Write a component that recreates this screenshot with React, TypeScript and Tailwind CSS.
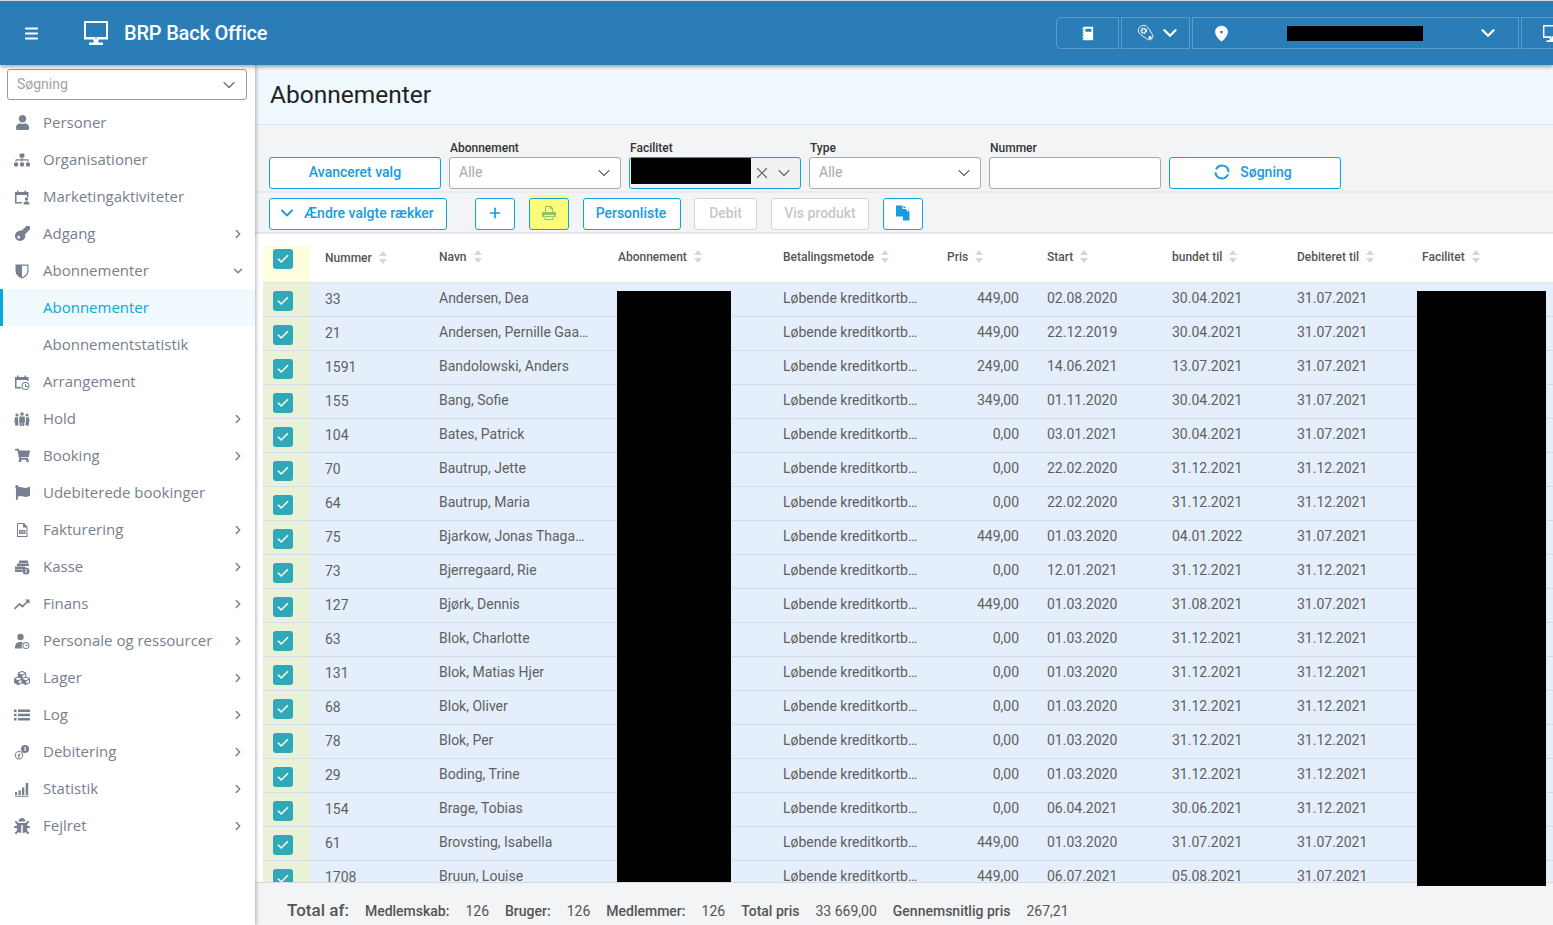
import { ReactNode } from "react";
import { ChevronDown, ChevronRight, Plus, X, Check, Menu, MapPin } from "lucide-react";
import { FaUser, FaSitemap, FaKey, FaShoppingCart, FaFlag, FaCubes, FaBug } from "react-icons/fa";

const rows = [
  ["33", "Andersen, Dea", "449,00", "02.08.2020", "30.04.2021", "31.07.2021"],
  ["21", "Andersen, Pernille Gaa…", "449,00", "22.12.2019", "30.04.2021", "31.07.2021"],
  ["1591", "Bandolowski, Anders", "249,00", "14.06.2021", "13.07.2021", "31.07.2021"],
  ["155", "Bang, Sofie", "349,00", "01.11.2020", "30.04.2021", "31.07.2021"],
  ["104", "Bates, Patrick", "0,00", "03.01.2021", "30.04.2021", "31.07.2021"],
  ["70", "Bautrup, Jette", "0,00", "22.02.2020", "31.12.2021", "31.12.2021"],
  ["64", "Bautrup, Maria", "0,00", "22.02.2020", "31.12.2021", "31.12.2021"],
  ["75", "Bjarkow, Jonas Thaga…", "449,00", "01.03.2020", "04.01.2022", "31.07.2021"],
  ["73", "Bjerregaard, Rie", "0,00", "12.01.2021", "31.12.2021", "31.12.2021"],
  ["127", "Bjørk, Dennis", "449,00", "01.03.2020", "31.08.2021", "31.07.2021"],
  ["63", "Blok, Charlotte", "0,00", "01.03.2020", "31.12.2021", "31.12.2021"],
  ["131", "Blok, Matias Hjer", "0,00", "01.03.2020", "31.12.2021", "31.12.2021"],
  ["68", "Blok, Oliver", "0,00", "01.03.2020", "31.12.2021", "31.12.2021"],
  ["78", "Blok, Per", "0,00", "01.03.2020", "31.12.2021", "31.12.2021"],
  ["29", "Boding, Trine", "0,00", "01.03.2020", "31.12.2021", "31.12.2021"],
  ["154", "Brage, Tobias", "0,00", "06.04.2021", "30.06.2021", "31.12.2021"],
  ["61", "Brovsting, Isabella", "449,00", "01.03.2020", "31.07.2021", "31.07.2021"],
  ["1708", "Bruun, Louise", "449,00", "06.07.2021", "05.08.2021", "31.07.2021"],
];

const gridCols = "grid grid-cols-[47px_114px_179px_165px_164px_100px_125px_125px_125px_145px]";

function SvgIcon({ children }: { children: ReactNode }) {
  return (
    <svg viewBox="0 0 16 16" width="16" height="16" fill="currentColor">
      {children}
    </svg>
  );
}

const CalendarUser = () => (
  <SvgIcon>
    <path d="M1 3h2V1.500h1.500V3h6V1.500H12V3h2.500v5H13V6H2.500v7H8v1.500H1z" />
    <circle cx="12.500" cy="10" r="1.700" />
    <path d="M9.500 15.500c0-2.200 1.300-3.200 3-3.200s3 1 3 3.200z" />
  </SvgIcon>
);

const CalendarClock = () => (
  <SvgIcon>
    <path d="M1 3h2V1.500h1.500V3h6V1.500H12V3h2.500v4H13V6H2.500v7H7v1.500H1z" />
    <path fillRule="evenodd" d="M11.500 8a4 4 0 1 1 0 8 4 4 0 0 1 0-8zm0 1a3 3 0 1 0 0 6 3 3 0 0 0 0-6zM11 10h1v2h2v1h-3z" />
  </SvgIcon>
);

const HalfShield = () => (
  <SvgIcon>
    <path d="M1.500 1.500H8v14c-3.500-1.500-6.500-4-6.500-7.500z" />
    <path fillRule="evenodd" d="M8 1.500h6.500V8c0 3.500-3 6-6.500 7.500v-1.300c2.900-1.300 5.300-3.400 5.300-6.200V2.700H8z" />
  </SvgIcon>
);

const Invoice = () => (
  <SvgIcon>
    <path fillRule="evenodd" d="M3 1h7l3.500 3.500V15H3zM4 2v12h8.500V5.500H9V2zM5 8h6.500v4H5zm1 1v.8h1.500V9zm2.500 0v.8H10.500V9zM6 10.700v.6h1.500v-.6zm2.500 0v.6h2v-.6z" />
  </SvgIcon>
);

const CashStack = () => (
  <SvgIcon>
    <path d="M5 1.500h9v2.500H5zM3 4.500h12v2.500H3zM1 7.500h10V10H1zM1 10.500h7.500V13H1z" />
    <circle cx="12" cy="12" r="3.500" />
    <rect x="11.500" y="10" width="1" height="4" fill="#fff" />
  </SvgIcon>
);

const PersonClock = () => (
  <SvgIcon>
    <circle cx="6.500" cy="4" r="3.200" />
    <path d="M1 15.500c0-4.500 1.500-6.500 5.500-6.500 1 0 1.800.1 2.500.5-1 1-1.500 3-1 6z" />
    <path fillRule="evenodd" d="M12 9a3.500 3.500 0 1 1 0 7 3.500 3.500 0 0 1 0-7zm0 1a2.500 2.500 0 1 0 0 5 2.500 2.500 0 0 0 0-5zm-.4.800h.8v1.500h1.300v.8h-2.100z" />
  </SvgIcon>
);

const Coins = () => (
  <SvgIcon>
    <path fillRule="evenodd" d="M5 7a4.200 4.200 0 1 1 0 8.400A4.200 4.200 0 0 1 5 7zm0 1a3.200 3.200 0 1 0 0 6.400A3.200 3.200 0 0 0 5 8z" />
    <path d="M4 9.800h2.200v2.100H4.900v1h1.400v.7H3.800v-2.300h1.500v-.9H4z" />
    <path fillRule="evenodd" d="M11 1a4 4 0 1 1 0 8 4 4 0 0 1 0-8zm-.5 2v4h1.200V3z" />
  </SvgIcon>
);

const ThreePeople = () => (
  <SvgIcon>
    <circle cx="3" cy="4" r="1.600" />
    <circle cx="8" cy="3" r="1.800" />
    <circle cx="13" cy="4" r="1.600" />
    <path d="M1 6.300h2.800l.4 3.700.4 4H3.300v1H1.500L.5 10z" />
    <path d="M15 6.300h-2.800l-.4 3.700-.4 4h1.300v1h1.800l1-5z" />
    <path d="M5.300 5.500h5.400l.3 5-.7 1v3.500H8.300v-3.500h-.6V15H5.700v-3.500l-.7-1z" />
  </SvgIcon>
);

const ZigzagLine = () => (
  <svg viewBox="0 0 16 16" width="16" height="16" fill="none" stroke="currentColor" strokeWidth="1.700">
    <path d="M0.500 13 5.500 8l3 2.500L14 5" />
    <path d="M11 3.500h4.500V8" strokeWidth="0" fill="currentColor" />
  </svg>
);

const ListLines = () => (
  <SvgIcon>
    <path d="M0 2.500h2.500V5H0zM4 2.500h12V5H4zM0 6.800h2.500v2.500H0zM4 6.800h12v2.500H4zM0 11h2.500v2.500H0zM4 11h12v2.500H4z" />
  </SvgIcon>
);

const Bars = () => (
  <SvgIcon>
    <path d="M1 11h2v3H1zM4.500 9.500h2.300V14H4.500zM8 6.500h2.300V14H8zM11.700 2h2.500v12h-2.500zM1 14.700h13.700v1H1z" />
  </SvgIcon>
);

const BeltGear = () => (
  <svg viewBox="0 0 20 20" width="18" height="18" fill="none" stroke="currentColor">
    <path d="M7.500 1.500c2.500 0 4 1.500 5 3l4.500 7c1.500 2.500 0 5.500-2.500 6-1.500.3-2.500-.2-3.500-1l-6-4c-2-1.500-3.500-3-3.500-5 0-3.500 2.500-6 6-6z" strokeWidth="1" />
    <circle cx="7.500" cy="7.500" r="2.500" strokeWidth="2.200" strokeDasharray="1.600 0.500" />
    <circle cx="14.500" cy="15" r="1.800" fill="currentColor" stroke="none" />
  </svg>
);

const Notebook = () => (
  <svg viewBox="0 0 14 16" width="12" height="15" fill="currentColor">
    <path fillRule="evenodd" d="M1.500 0H13v16H1.500zM4 2.500V6h7V2.500z" />
    <path d="M0 2h1v1H0zM0 5h1v1H0zM0 8h1v1H0zM0 11h1v1H0zM0 14h1v1H0z" />
  </svg>
);

const Monitor = ({ size }: { size: number }) => (
  <svg viewBox="0 0 24 24" width={size} height={size} fill="currentColor">
    <path fillRule="evenodd" d="M0 0h24v18.500H14.500v3H19V24H5v-2.500h4.500v-3H0zM2 2v14h20V2z" />
    <circle cx="12" cy="17.300" r="0.800" fill="#2a7db7" />
  </svg>
);

const CopyDocs = () => (
  <svg viewBox="0 0 16 16" width="16" height="16" fill="currentColor">
    <path d="M1 0.500h6.500V4H11v7.500H1z" />
    <path d="M8.500 0.500 11 3H8.500z" />
    <path d="M8 5h4v1.500h2.500V15.500H8zM13 5l1.500 1H13z" />
  </svg>
);

const RingArrows = () => (
  <svg viewBox="0 0 16 16" width="16" height="16" fill="none" stroke="currentColor" strokeWidth="2" className="mr-[10px]">
    <circle cx="8" cy="8" r="6.500" strokeDasharray="17.400 3" transform="rotate(20 8 8)" />
  </svg>
);

const PrinterIcon = () => (
  <svg viewBox="0 0 16 16" width="16" height="16" fill="currentColor">
    <path fillRule="evenodd" d="M4 1h6l2 2v4h-1V4H9V2H5v5H4z" />
    <path d="M1 7h14v5h-2v-2H3v2H1z" />
    <path d="M3.500 11h9v4h-9zM4.500 12v2h7v-2z" fillRule="evenodd" />
  </svg>
);

const menu: { icon: ReactNode; label: string; arrow?: "right" | "down"; active?: boolean; sub?: boolean }[] = [
  { icon: <FaUser size={15} />, label: "Personer" },
  { icon: <FaSitemap size={16} />, label: "Organisationer" },
  { icon: <CalendarUser />, label: "Marketingaktiviteter" },
  { icon: <FaKey size={15} className="rotate-180" />, label: "Adgang", arrow: "right" },
  { icon: <HalfShield />, label: "Abonnementer", arrow: "down" },
  { icon: null, label: "Abonnementer", active: true, sub: true },
  { icon: null, label: "Abonnementstatistik", sub: true },
  { icon: <CalendarClock />, label: "Arrangement" },
  { icon: <ThreePeople />, label: "Hold", arrow: "right" },
  { icon: <FaShoppingCart size={15} />, label: "Booking", arrow: "right" },
  { icon: <FaFlag size={15} />, label: "Udebiterede bookinger" },
  { icon: <Invoice />, label: "Fakturering", arrow: "right" },
  { icon: <CashStack />, label: "Kasse", arrow: "right" },
  { icon: <ZigzagLine />, label: "Finans", arrow: "right" },
  { icon: <PersonClock />, label: "Personale og ressourcer", arrow: "right" },
  { icon: <FaCubes size={16} />, label: "Lager", arrow: "right" },
  { icon: <ListLines />, label: "Log", arrow: "right" },
  { icon: <Coins />, label: "Debitering", arrow: "right" },
  { icon: <Bars />, label: "Statistik", arrow: "right" },
  { icon: <FaBug size={16} />, label: "Fejlret", arrow: "right" },
];

function SortIcon() {
  return (
    <svg viewBox="0 0 8 13" width="8" height="13" fill="#d4d6d9" className="ml-[7px] shrink-0">
      <path d="M4 0 8 5H0zM4 13 0 8h8z" />
    </svg>
  );
}

function Checkbox() {
  return (
    <div className="w-5 h-5 rounded-[3px] bg-[#2fa9b8] flex items-center justify-center">
      <Check size={14} strokeWidth={2.5} className="text-white" />
    </div>
  );
}

function Select({ label, value }: { label: string; value: string }) {
  return (
    <div className="w-[172px]">
      <div className="text-xs leading-[14px] mb-[2px] pl-[1px] text-[#333] font-medium">{label}</div>
      <div className="h-8 bg-white border border-[#a9a9a9] rounded-[3px] flex items-center justify-between pl-[9px] pr-[6px] text-sm text-[#a8a8a8]">
        <span className="pb-[2px]">{value}</span>
        <ChevronDown size={20} strokeWidth={1.3} className="text-[#666]" />
      </div>
    </div>
  );
}

function ToolButton({ children, className }: { children: ReactNode; className: string }) {
  return (
    <button className={`h-8 shrink-0 rounded-[3px] border border-[#0ea5dc] text-sm font-medium flex items-center justify-center pb-[2px] ${className}`}>
      {children}
    </button>
  );
}

export default function App() {
  const headers = ["Nummer", "Navn", "Abonnement", "Betalingsmetode", "Pris", "Start", "bundet til", "Debiteret til", "Facilitet"];

  return (
    <div className="h-[925px] overflow-hidden flex flex-col bg-white font-['Roboto',sans-serif]">
      <header className="relative z-20 h-[65px] shrink-0 bg-[#2a7db7] border-t border-[#d4d8db] shadow-[0_2px_4px_rgba(0,0,0,0.35)] flex items-center text-white overflow-hidden">
        <Menu size={17} strokeWidth={2.6} className="ml-[23px]" />
        <div className="ml-[44px]"><Monitor size={24} /></div>
        <div className="ml-4 text-xl font-medium tracking-[-0.2px]">BRP Back Office</div>
        <div className="ml-auto flex h-8 gap-[2px] shrink-0 w-[497px]">
          <div className="w-[63px] shrink-0 border border-white/25 rounded-l-[5px] flex items-center justify-center"><Notebook /></div>
          <div className="w-[69px] shrink-0 border border-white/25 flex items-center pl-[15px] gap-[4px]">
            <BeltGear />
            <ChevronDown size={22} strokeWidth={2.6} />
          </div>
          <div className="w-[327px] shrink-0 border border-white/25 flex items-center pl-[20px]">
            <MapPin size={17} fill="currentColor" stroke="currentColor" className="[&>circle]:fill-[#2a7db7]" />
            <div className="ml-[57px] w-[136px] h-[15px] bg-black" />
            <ChevronDown size={22} strokeWidth={2.6} className="ml-[54px]" />
          </div>
          <div className="w-[60px] shrink-0 border border-white/25 flex items-center pl-[21px]"><Monitor size={17} /></div>
        </div>
      </header>

      <div className="flex-1 flex min-h-0">
        <aside className="relative z-10 w-[255px] shrink-0 bg-white shadow-[1px_0_4px_rgba(0,0,0,0.3)] font-['Open_Sans',sans-serif] text-[15px] text-[#76808e]">
          <div className="ml-[7px] mr-2 mt-1 mb-1 h-[31px] border border-[#9a9a9a] rounded-[3px] flex items-center justify-between pl-[9px] pr-[7px] font-['Roboto',sans-serif] text-sm text-[#a3a3a3]">
            <span className="pb-[1px]">Søgning</span>
            <ChevronDown size={20} strokeWidth={1.3} className="text-[#666]" />
          </div>
          {menu.map((m, i) => (
            <div key={i} className={`h-[37px] flex items-center ${m.active ? "bg-[#f0f9fd] border-l-[3px] border-[#0ba6dc] text-[#0ba6dc] pl-[40px]" : "pl-[14px]"}`}>
              {!m.sub && <span className="w-4 mr-[13px] flex justify-center text-[#76808e]">{m.icon}</span>}
              {m.sub && !m.active && <span className="w-[29px]" />}
              <span className="whitespace-nowrap">{m.label}</span>
              {m.arrow === "right" && <ChevronRight size={14} strokeWidth={2.5} className="ml-auto mr-[10px]" />}
              {m.arrow === "down" && <ChevronDown size={14} strokeWidth={2.5} className="ml-auto mr-[10px]" />}
            </div>
          ))}
        </aside>

        <main className="flex-1 min-w-0 flex flex-col bg-[#f3f4f6]">
          <div className="h-[60px] shrink-0 bg-[#f0f9fd] border-b border-[#e2e5e8] flex items-center pl-[15px] pt-[2px] text-[24.5px] font-normal text-[#222]">
            Abonnementer
          </div>

          <div className="h-[68px] shrink-0 border-b-2 border-[#e8eaed] pl-[14px] flex gap-2 pt-4">
            <div className="pt-4">
              <ToolButton className="w-[172px] bg-white text-[#1a9bdb]">Avanceret valg</ToolButton>
            </div>
            <Select label="Abonnement" value="Alle" />
            <div className="w-[172px]">
              <div className="text-xs leading-[14px] mb-[2px] pl-[1px] text-[#333] font-medium">Facilitet</div>
              <div className="h-8 bg-[#f0f1f3] border border-[#0ea5dc] rounded-[3px] flex items-start">
                <div className="w-[120px] h-[26px] ml-[1px] bg-black" />
                <div className="h-full flex items-center">
                  <X size={18} strokeWidth={1.6} className="ml-[2px] text-[#666]" />
                  <ChevronDown size={20} strokeWidth={1.3} className="ml-[3px] text-[#666]" />
                </div>
              </div>
            </div>
            <Select label="Type" value="Alle" />
            <div className="w-[172px]">
              <div className="text-xs leading-[14px] mb-[2px] pl-[1px] text-[#333] font-medium">Nummer</div>
              <div className="h-8 bg-white border border-[#a9a9a9] rounded-[3px]" />
            </div>
            <div className="pt-4">
              <ToolButton className="w-[172px] bg-white text-[#1a9bdb] pr-1">
                <RingArrows />
                Søgning
              </ToolButton>
            </div>
          </div>

          <div className="h-[41px] shrink-0 border-b-2 border-[#e3e5e8] pl-[14px] flex items-start pt-[5px]">
            <ToolButton className="w-[178px] justify-start pl-[7px] bg-white text-[#1a9bdb]">
              <ChevronDown size={20} strokeWidth={2.2} className="mr-[7px]" />
              Ændre valgte rækker
            </ToolButton>
            <ToolButton className="w-10 ml-[28px] bg-white text-[#1a9bdb]"><Plus size={16} strokeWidth={2.5} /></ToolButton>
            <div className="relative ml-[14px]">
              <div className="absolute -top-[3px] left-0 w-10 h-2 bg-[#fdfb7a]" />
              <ToolButton className="relative w-10 bg-[#fdfb7a] text-[#8cc56f]"><PrinterIcon /></ToolButton>
            </div>
            <ToolButton className="w-[98px] ml-[14px] pr-[2px] bg-white text-[#1a9bdb]">Personliste</ToolButton>
            <button className="h-8 w-[63px] ml-[13px] rounded-[3px] border border-[#d2d4d7] bg-white pb-[2px] text-sm font-medium text-[#c4c7cb]">Debit</button>
            <button className="h-8 w-[98px] ml-[14px] rounded-[3px] border border-[#d2d4d7] bg-white pb-[2px] text-sm font-medium text-[#c4c7cb]">Vis produkt</button>
            <ToolButton className="w-10 ml-[14px] bg-white text-[#1a9bdb]"><CopyDocs /></ToolButton>
          </div>

          <div className="relative flex-1 min-h-0 flex flex-col">
            <div className="flex-1 min-h-0 overflow-hidden bg-white pl-2 border-b border-[#d5d9de]">
              <div className={`${gridCols} h-[49px] border-b border-[#dfe3e8] text-xs font-medium text-[#555]`}>
                <div className="bg-[#ffffe0] mt-3 flex items-center justify-center pr-[7px] pb-[10px]">
                  <Checkbox />
                </div>
                {headers.map((h, i) => (
                  <div key={h} className={`flex items-center pl-[15px] ${i === 0 ? "pb-[1px]" : "pb-[3px]"}`}>
                    {h}
                    <SortIcon />
                  </div>
                ))}
              </div>
              {rows.map((r) => (
                <div key={r[0]} className={`${gridCols} h-[34px] bg-[#e4effb] border-b border-[#d3deec] text-sm text-[#5f5f5f]`}>
                  <div className="bg-[#e9f1d6] flex items-center justify-center pr-[7px] pt-[3px]"><Checkbox /></div>
                  <div className="flex items-center pl-[15px] pb-[1px]">{r[0]}</div>
                  <div className="flex items-center pl-[15px] pb-[3px]">{r[1]}</div>
                  <div />
                  <div className="flex items-center pl-[15px] pb-[3px]">Løbende kreditkortb…</div>
                  <div className="flex items-center justify-end pr-[13px] pb-[3px]">{r[2]}</div>
                  <div className="flex items-center pl-[15px] pb-[3px]">{r[3]}</div>
                  <div className="flex items-center pl-[15px] pb-[3px]">{r[4]}</div>
                  <div className="flex items-center pl-[15px] pb-[3px]">{r[5]}</div>
                  <div />
                </div>
              ))}
            </div>
            {/* redacted columns lie over the rows */}
            <div className="absolute left-[362px] top-[57px] w-[114px] h-[591px] bg-black" />
            <div className="absolute left-[1162px] top-[57px] w-[129px] h-[595px] bg-black" />
            <div className="h-[42px] shrink-0 flex items-center pl-8 pt-[13px] text-sm text-[#555]">
              <span className="text-[17px] font-medium mr-4">Total af:</span>
              <span className="font-medium mr-4">Medlemskab:</span>
              <span className="mr-4">126</span>
              <span className="font-medium mr-4">Bruger:</span>
              <span className="mr-4">126</span>
              <span className="font-medium mr-4">Medlemmer:</span>
              <span className="mr-4">126</span>
              <span className="font-medium mr-4">Total pris</span>
              <span className="mr-4">33 669,00</span>
              <span className="font-medium mr-4">Gennemsnitlig pris</span>
              <span>267,21</span>
            </div>
          </div>
        </main>
      </div>
    </div>
  );
}
